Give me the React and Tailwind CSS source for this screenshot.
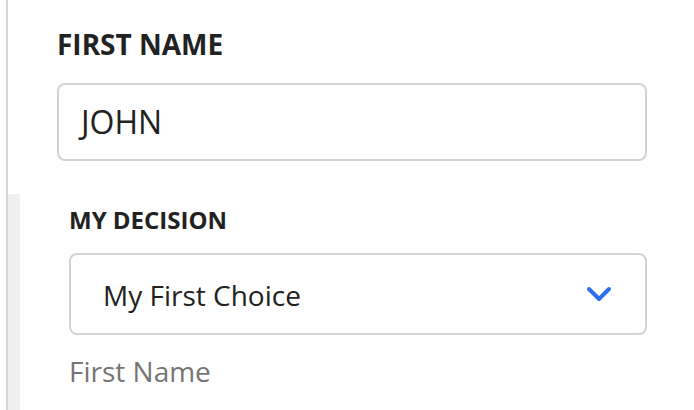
import React from "react";

const Chevron = () => (
  <svg width="26" height="16" viewBox="0 0 26 16" fill="none">
    <polyline
      points="3,3 13,13 23,3"
      stroke="#2d6ef0"
      strokeWidth="4"
      strokeLinecap="round"
      strokeLinejoin="round"
    />
  </svg>
);

const App = () => {
  return (
    <div
      className="w-[694px] h-[410px] overflow-hidden bg-white flex pl-[6px]"
      style={{ fontFamily: '"Open Sans", "Noto Sans", sans-serif' }}
    >
      <div className="flex-1 flex flex-col border-l-2 border-[#d6d6d6]">
        <div className="pl-[49px] pr-[47px] pt-[26px]">
          <div className="text-[28px] leading-[36px] font-bold text-[#222222]">
            FIRST NAME
          </div>
          <div className="mt-[21px] h-[78px] border-2 border-[#d4d4d4] rounded-[8px] flex items-center pl-[22px]">
            <span className="text-[32px] leading-[40px] text-[#222222]">JOHN</span>
          </div>
        </div>

        <div className="mt-[33px] flex-1 border-l-[12px] border-[#efefef] pl-[49px] pr-[47px] pt-[10px]">
          <div className="text-[24px] leading-[32px] font-bold text-[#222222]">
            MY DECISION
          </div>
          <div className="mt-[17px] h-[82px] border-2 border-[#d4d4d4] rounded-[8px] flex items-center justify-between pl-[32px] pr-[33px]">
            <span className="text-[28px] leading-[36px] text-[#222222] pt-[2px]">
              My First Choice
            </span>
            <Chevron />
          </div>
          <div className="mt-[18px] text-[28px] leading-[36px] text-[#757575]">
            First Name
          </div>
        </div>
      </div>
    </div>
  );
};

export default App;
